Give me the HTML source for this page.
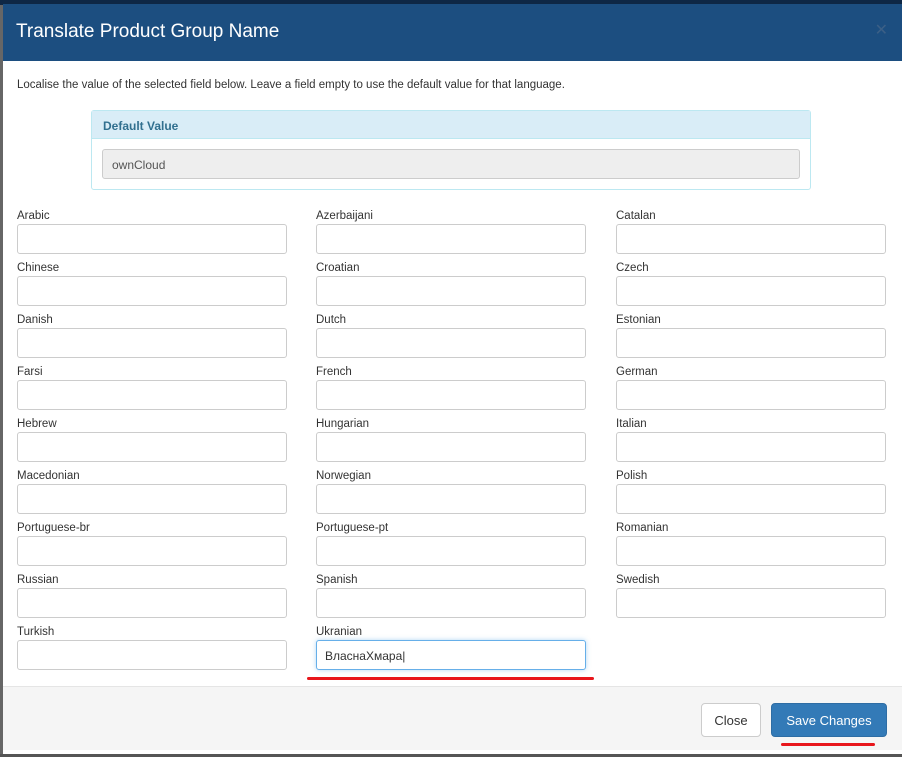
<!DOCTYPE html>
<html><head><meta charset="utf-8"><style>
*{box-sizing:border-box;margin:0;padding:0}
body{width:902px;height:757px;overflow:hidden;background:#666;font-family:"Liberation Sans",sans-serif;position:relative}
.top{position:absolute;left:0;top:0;width:902px;height:5px;background:#0e2745}
.modal{position:absolute;left:3px;top:4px;width:899px;height:750px;background:#fff}
.hdr{height:57px;background:#1c4e80;color:#fff;font-size:19px;padding:17px 0 0 13px;position:relative}
.hdr .x{position:absolute;right:14px;top:16px;color:#3b5f86;font-size:16px}
.intro{position:absolute;left:14px;top:75px;font-size:11.5px;color:#333}
.panel{position:absolute;left:88px;top:106px;width:720px;height:80px;border:1px solid #bce8f1;border-radius:3px}
.panel .ph{height:28px;background:#d9edf7;border-bottom:1px solid #bce8f1;color:#31708f;font-size:12px;font-weight:bold;padding:8px 0 0 11px}
.panel .pi{position:absolute;left:10px;top:38px;width:698px;height:30px;background:#eee;border:1px solid #ccc;border-radius:3px;font-size:12px;color:#555;padding:8px 0 0 9px}
.f{position:absolute;width:270px}
.f label{display:block;font-size:11.5px;color:#333;height:15px;line-height:14px}
.f .in{height:30px;border:1px solid #ccc;border-radius:3px;background:#fff;margin-top:0}
.f .in.act{border-color:#66afe9;box-shadow:0 0 5px rgba(102,175,233,.5);font-size:12px;color:#333;padding:8px 0 0 8px}
.foot{position:absolute;left:0;top:686px;width:899px;height:64px;background:#f5f5f5;border-top:1px solid #e5e5e5}
.btn{position:absolute;top:16px;height:34px;border-radius:4px;font-size:13px;padding-top:9px;text-align:center}
.red{position:absolute;height:3px;background:#e8161b;border-radius:2px}
.bot{position:absolute;left:0;top:754px;width:902px;height:3px;background:#555}
</style></head><body>
<div class="top"></div>
<div class="modal">
<div class="hdr">Translate Product Group Name<span class="x">✕</span></div>
<div class="intro">Localise the value of the selected field below. Leave a field empty to use the default value for that language.</div>
<div class="panel"><div class="ph">Default Value</div><div class="pi">ownCloud</div></div>
</div>
<div id="fields"></div>
<div class="foot" style="left:3px">
<div class="btn" style="left:698px;width:60px;background:#fff;border:1px solid #ccc;color:#333">Close</div>
<div class="btn" style="left:768px;width:116px;background:#337ab7;border:1px solid #2e6da4;color:#fff">Save Changes</div>
</div>
<div class="red" style="left:307px;top:677px;width:287px"></div>
<div class="red" style="left:781px;top:743px;width:94px"></div>
<div class="bot"></div>
<div class="f" style="left:17px;top:209px"><label>Arabic</label><div class="in"></div></div>
<div class="f" style="left:316px;top:209px"><label>Azerbaijani</label><div class="in"></div></div>
<div class="f" style="left:616px;top:209px"><label>Catalan</label><div class="in"></div></div>
<div class="f" style="left:17px;top:261px"><label>Chinese</label><div class="in"></div></div>
<div class="f" style="left:316px;top:261px"><label>Croatian</label><div class="in"></div></div>
<div class="f" style="left:616px;top:261px"><label>Czech</label><div class="in"></div></div>
<div class="f" style="left:17px;top:313px"><label>Danish</label><div class="in"></div></div>
<div class="f" style="left:316px;top:313px"><label>Dutch</label><div class="in"></div></div>
<div class="f" style="left:616px;top:313px"><label>Estonian</label><div class="in"></div></div>
<div class="f" style="left:17px;top:365px"><label>Farsi</label><div class="in"></div></div>
<div class="f" style="left:316px;top:365px"><label>French</label><div class="in"></div></div>
<div class="f" style="left:616px;top:365px"><label>German</label><div class="in"></div></div>
<div class="f" style="left:17px;top:417px"><label>Hebrew</label><div class="in"></div></div>
<div class="f" style="left:316px;top:417px"><label>Hungarian</label><div class="in"></div></div>
<div class="f" style="left:616px;top:417px"><label>Italian</label><div class="in"></div></div>
<div class="f" style="left:17px;top:469px"><label>Macedonian</label><div class="in"></div></div>
<div class="f" style="left:316px;top:469px"><label>Norwegian</label><div class="in"></div></div>
<div class="f" style="left:616px;top:469px"><label>Polish</label><div class="in"></div></div>
<div class="f" style="left:17px;top:521px"><label>Portuguese-br</label><div class="in"></div></div>
<div class="f" style="left:316px;top:521px"><label>Portuguese-pt</label><div class="in"></div></div>
<div class="f" style="left:616px;top:521px"><label>Romanian</label><div class="in"></div></div>
<div class="f" style="left:17px;top:573px"><label>Russian</label><div class="in"></div></div>
<div class="f" style="left:316px;top:573px"><label>Spanish</label><div class="in"></div></div>
<div class="f" style="left:616px;top:573px"><label>Swedish</label><div class="in"></div></div>
<div class="f" style="left:17px;top:625px"><label>Turkish</label><div class="in"></div></div>
<div class="f" style="left:316px;top:625px"><label>Ukranian</label><div class="in act">ВласнаХмара|</div></div>
</body></html>
